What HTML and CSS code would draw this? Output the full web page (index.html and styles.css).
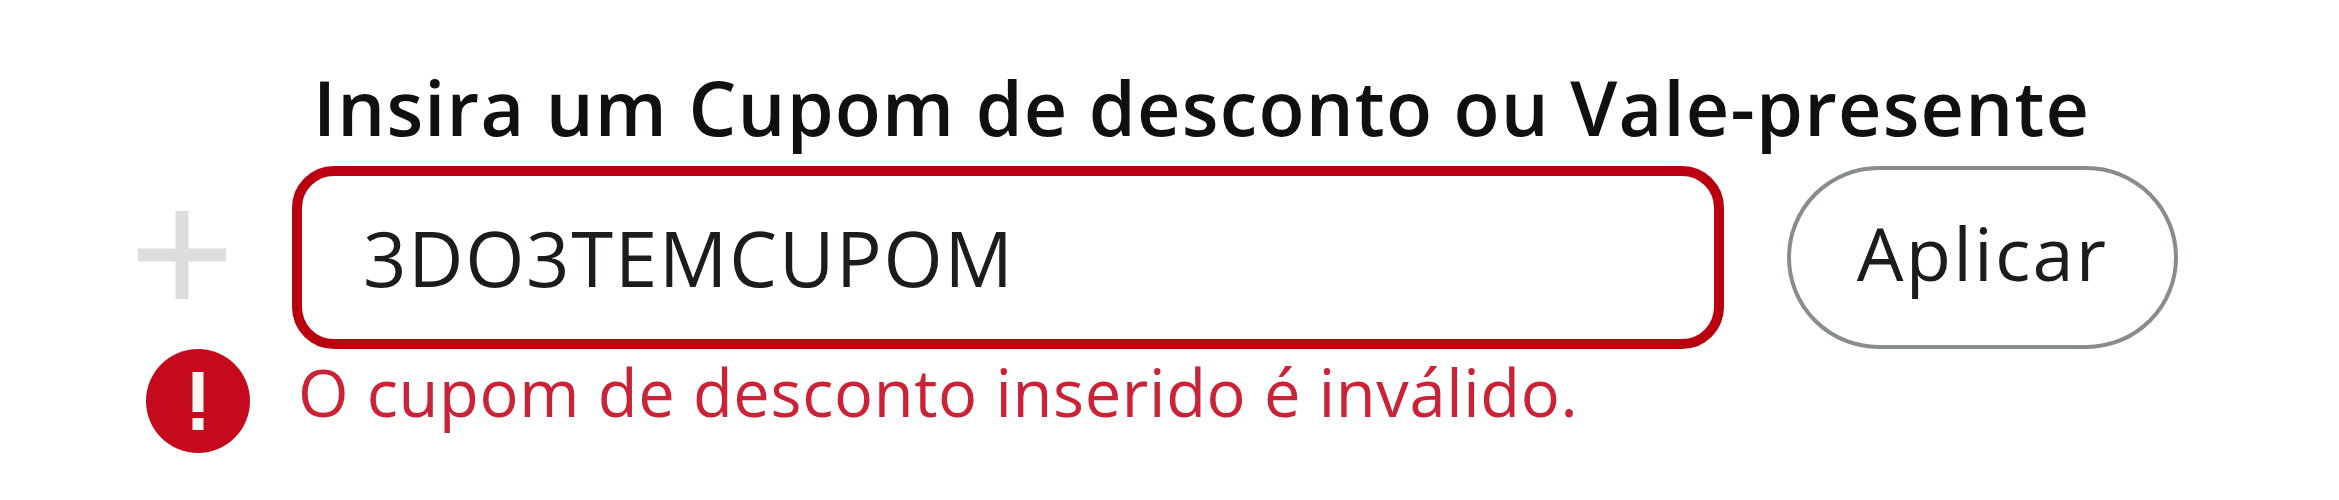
FILE: index.html
```html
<!DOCTYPE html>
<html lang="pt-BR">
<head>
<meta charset="utf-8">
<title>Cupom de desconto</title>
<link rel="stylesheet" href="styles.css">
</head>
<body>
<form class="coupon">
  <label class="coupon-label" for="code">Insira um Cupom de desconto ou Vale-presente</label>
  <div class="coupon-row">
    <svg class="plus" viewBox="0 0 90 90" aria-hidden="true"><path d="M45 1V89M1 45H89"/></svg>
    <input class="code" id="code" type="text" value="3DO3TEMCUPOM" spellcheck="false">
    <button class="apply" type="button">Aplicar</button>
  </div>
  <div class="error">
    <svg class="error-icon" viewBox="0 0 104 104" aria-hidden="true"><circle cx="52" cy="52" r="52"/><path d="M46.5 23h11v40h-11zM46.5 69h11v12h-11z"/></svg>
    <span class="error-text">O cupom de desconto inserido é inválido.</span>
  </div>
</form>
</body>
</html>
```
FILE: styles.css
```css
* { box-sizing: border-box; }
body {
  margin: 0;
  background: #fff;
  color: #0f1111;
  font-family: "Open Sans", "Noto Sans", sans-serif;
}
.coupon {
  width: 2339px;
  height: 500px;
  padding: 67px 0 0 137px;
}
.coupon-label {
  display: block;
  margin: 0 0 19px 176px;
  font-size: 75.5px;
  line-height: 80px;
  font-weight: 600;
  letter-spacing: 1.2px;
  word-spacing: -0.5px;
  white-space: nowrap;
}
.coupon-row {
  display: flex;
  align-items: center;
  height: 183px;
}
.plus {
  width: 90px;
  height: 90px;
  margin: -5px 65px 0 0;
  fill: none;
  stroke: #ddd;
  stroke-width: 13;
}
.code {
  width: 1432px;
  height: 183px;
  margin: 0 63px 0 0;
  padding: 0 61px;
  border: 10px solid #ba0010;
  border-radius: 42px;
  outline: 0;
  background: #fff;
  color: #1b1d1d;
  font: 400 76px "Open Sans", "Noto Sans", sans-serif;
  letter-spacing: 1.8px;
}
.apply {
  width: 391px;
  height: 183px;
  padding: 0 0 10px;
  border: 4px solid #888c8c;
  border-radius: 92px;
  background: #fff;
  color: #1b1d1d;
  font: 400 74px "Open Sans", "Noto Sans", sans-serif;
  letter-spacing: 2.2px;
}
.error {
  display: flex;
  padding-left: 9px;
}
.error-icon {
  width: 104px;
  height: 104px;
  margin-right: 48px;
  fill: #c40a1c;
}
.error-icon path { fill: #fff8f0; }
.error-text {
  color: #cb2236;
  font-size: 65px;
  line-height: 87px;
  letter-spacing: 0.67px;
  white-space: nowrap;
}
```
